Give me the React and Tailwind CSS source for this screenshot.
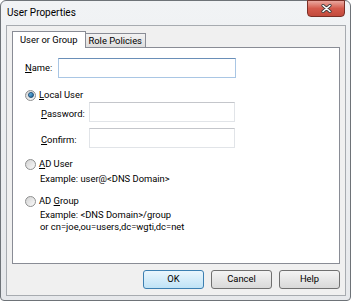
import React from 'react';

const font = { fontFamily: 'Roboto, "Liberation Sans", sans-serif' };

const Radio = ({ checked }) => (
  <span className="w-[11px] h-[11px] rounded-full border border-[#8e8f8f] bg-gradient-to-br from-[#d2d2d2] to-[#fbfbfb] flex items-center justify-center shrink-0">
    {checked && (
      <span className="w-[6px] h-[6px] rounded-full bg-gradient-to-br from-[#74c6f2] to-[#1b5f94] border border-[#1e4e78]" />
    )}
  </span>
);

const TextBox = ({ className, focus }) => (
  <div
    className={`h-[20px] bg-white border ${
      focus
        ? 'border-[#a9c6e4] border-t-[#6a8fb8]'
        : 'border-[#e1e4e8] border-t-[#c4c6cb]'
    } ${className}`}
  />
);

const U = ({ children }) => <span className="underline underline-offset-[1px]">{children}</span>;

const Button = ({ children, primary }) => (
  <button
    className={`w-[61px] h-[19px] rounded-[3px] border text-[9.4px] text-black flex items-center justify-center ${
      primary
        ? 'border-[#3c7fb1] bg-gradient-to-b from-[#eaf6fd] to-[#c0e3f6]'
        : 'border-[#707070] bg-gradient-to-b from-[#f4f4f4] to-[#d9d9d9]'
    }`}
  >
    {children}
  </button>
);

export default function App() {
  return (
    <div className="w-[352px] h-[303px] bg-white" style={font}>
      <div className="w-[351px] h-[301px] rounded-t-[6px] rounded-b-[4px] border border-[#6e7378] bg-gradient-to-b from-[#f1f3f5] to-[#e6e8eb] flex flex-col">
        {/* title bar */}
        <div className="h-[24px] flex justify-between">
          <div className="pl-[6px] pt-[5px] text-[10px] text-black leading-[14px]">User Properties</div>
          <div className="mr-[5px] w-[38px] h-[17px] -mt-px rounded-b-[4px] border border-[#7a2e25] bg-gradient-to-b from-[#e9a79f] via-[#d45a4c] to-[#c24a3c] flex items-center justify-center">
            <svg width="11" height="9" viewBox="0 0 11 9">
              <path d="M2 1.5 L9 7.5 M9 1.5 L2 7.5" stroke="#3b3b3b" strokeWidth="3.2" strokeLinecap="round" />
              <path d="M2 1.5 L9 7.5 M9 1.5 L2 7.5" stroke="#ffffff" strokeWidth="1.6" strokeLinecap="round" />
            </svg>
          </div>
        </div>

        {/* client area */}
        <div className="ml-[5px] mr-[4px] h-[271px] border border-[#a7abb0] bg-[#f0f0f0] flex flex-col text-[9.4px] text-black">
          <div className="flex items-end pl-[5px] pt-[5px]">
            <div className="relative z-10 h-[17px] -mb-px px-[7px] bg-white border border-b-0 border-[#898c95] flex items-center leading-none">
              User or Group
            </div>
            <div className="h-[14px] px-[3px] border border-l-0 border-b-0 border-[#898c95] bg-gradient-to-b from-[#f2f2f2] to-[#dedede] flex items-center leading-none">
              Role Policies
            </div>
          </div>

          <div className="mx-[5px] h-[217px] border border-[#898c95] bg-white pl-[12px] pt-[10px] flex flex-col">
            <div className="h-[20px] flex items-center">
              <span className="w-[33px]"><U>N</U>ame:</span>
              <TextBox className="w-[178px]" focus />
            </div>

            <div className="mt-[10px] h-[14px] flex items-center gap-[3px]">
              <Radio checked />
              <span><U>L</U>ocal User</span>
            </div>

            <div className="h-[20px] flex items-center pl-[16px]">
              <span className="w-[48px] pt-[4px]"><U>P</U>assword:</span>
              <TextBox className="w-[146px]" />
            </div>

            <div className="mt-[6px] h-[20px] flex items-center pl-[16px]">
              <span className="w-[48px] pt-[4px]"><U>C</U>onfirm:</span>
              <TextBox className="w-[146px]" />
            </div>

            <div className="mt-[9px] h-[14px] flex items-center gap-[3px]">
              <Radio />
              <span><U>A</U>D User</span>
            </div>
            <div className="mt-[1px] h-[14px] flex items-center pl-[15px]">Example: user@&lt;DNS Domain&gt;</div>

            <div className="mt-[8px] h-[14px] flex items-center gap-[3px]">
              <Radio />
              <span>AD <U>G</U>roup</span>
            </div>
            <div className="mt-[1px] pl-[15px] leading-[12px]">
              <div>Example: &lt;DNS Domain&gt;/group</div>
              <div>or cn=joe,ou=users,dc=wgti,dc=net</div>
            </div>
          </div>

          <div className="mt-[6px] mr-[5px] flex justify-end gap-[7px]">
            <Button primary>OK</Button>
            <Button>Cancel</Button>
            <Button>Help</Button>
          </div>
        </div>
      </div>
    </div>
  );
}
